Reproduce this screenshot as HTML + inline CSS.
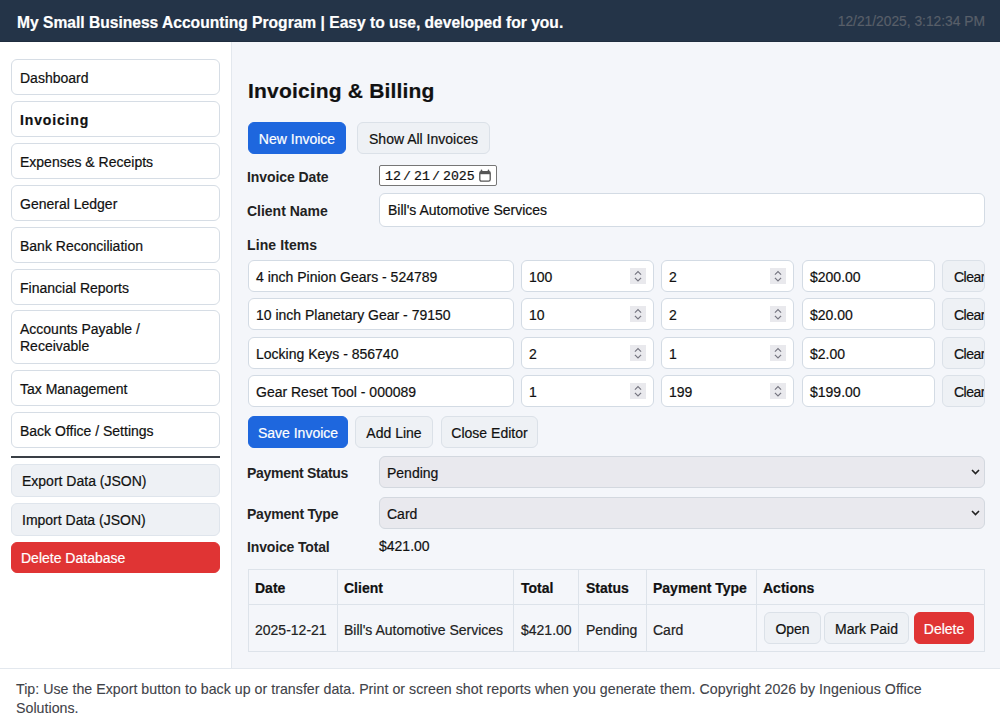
<!DOCTYPE html>
<html><head><meta charset="utf-8">
<style>
*{box-sizing:border-box;margin:0;padding:0}
html,body{width:1000px;height:724px;overflow:hidden}
body{font-family:"Liberation Sans",sans-serif;font-size:14px;color:#111;background:#f4f6fa;-webkit-text-stroke:0.2px currentColor;position:relative}
.abs{position:absolute}
#hdr{left:0;top:0;width:1000px;height:42px;background:#243448;border-bottom:1px solid #1f2d3f}
#hdr .t{left:17px;top:14px;font-weight:bold;font-size:15.6px;color:#fff;white-space:nowrap;line-height:18px}
#hdr .d{right:15px;top:14px;color:#585f69;font-size:13.8px;line-height:16px;white-space:nowrap}
#side{left:0;top:42px;width:232px;height:626px;background:#fff;border-right:1px solid #e3e8ee}
.nb{position:absolute;left:11px;width:209px;height:36px;border:1px solid #d6dde5;border-radius:6px;background:#fff;padding-left:8px;padding-top:1px;line-height:34px;font-size:14px;color:#111;white-space:nowrap}
.nb.b{font-weight:bold;letter-spacing:0.85px}
.sb{position:absolute;left:11px;width:209px;height:33px;border:1px solid #dfe5ec;border-radius:6px;background:#eef1f5;padding-left:10px;line-height:33px;font-size:14px;color:#111;white-space:nowrap}
.sb.red{background:#e03434;border-color:#e03434;color:#fff;padding-left:9px;height:31px;line-height:31px}
#hr{left:11px;top:456px;width:209px;height:2px;background:#3a3f46}
#foot{left:0;top:668px;width:1000px;height:56px;background:#fff;border-top:1px solid #e3e8ee}
#foot .tx{left:16px;top:11px;width:950px;font-size:14.2px;letter-spacing:0.025px;line-height:19px;color:#3f4349;-webkit-text-stroke:0.1px currentColor}
h2{position:absolute;left:248px;top:78px;font-size:21px;letter-spacing:0.18px;font-weight:bold;color:#111;line-height:26px;white-space:nowrap}
.btn{position:absolute;height:32px;border:1px solid #dbe1e8;border-radius:6px;background:#eef1f5;color:#111;font-size:14px;line-height:32px;text-align:center;white-space:nowrap}
.btn.blue{background:#1e67de;border-color:#1e67de;color:#fff}
.btn.red{background:#e03434;border-color:#e03434;color:#fff}
.lbl{position:absolute;left:247px;font-weight:bold;font-size:14px;-webkit-text-stroke:0;color:#222;white-space:nowrap;line-height:16px}
.inp{position:absolute;height:32px;border:1px solid #d3dbe4;border-radius:6px;background:#fff;font-size:14px;line-height:32px;padding-left:7px;color:#111;white-space:nowrap;overflow:hidden}
.spin{position:absolute;top:7px;width:16px;height:16px;background:#e9e9ed}
.spin svg{display:block}
.dt{position:absolute;top:169px;font-family:"Liberation Mono",monospace;font-size:13.2px;line-height:15px;color:#111;white-space:nowrap}
.sel svg{position:absolute;right:4px;top:12px}
.sel{position:absolute;left:379px;width:606px;height:32px;border:1px solid #d3d8df;border-radius:6px;background:#e9e9ee;font-size:14px;line-height:32px;padding-left:7px;color:#111}
.clr{left:0;top:0;width:43px;overflow:hidden;text-align:left;padding-left:11px;line-height:32px;letter-spacing:-0.5px}
.th{position:absolute;top:580px;font-weight:bold;font-size:14px;line-height:16px;color:#111;white-space:nowrap}
.td{position:absolute;top:622px;font-size:14px;line-height:16px;color:#222;white-space:nowrap}
</style></head><body>
<div id="hdr" class="abs"><div class="abs t">My Small Business Accounting Program | Easy to use, developed for you.</div><div class="abs d">12/21/2025, 3:12:34 PM</div></div>
<div id="side" class="abs"></div>
<div class="nb" style="top:59px">Dashboard</div>
<div class="nb b" style="top:101px">Invoicing</div>
<div class="nb" style="top:143px">Expenses &amp; Receipts</div>
<div class="nb" style="top:185px">General Ledger</div>
<div class="nb" style="top:227px">Bank Reconciliation</div>
<div class="nb" style="top:269px">Financial Reports</div>
<div class="nb" style="top:310px;height:54px;line-height:17px;padding-top:10px">Accounts Payable /<br>Receivable</div>
<div class="nb" style="top:370px">Tax Management</div>
<div class="nb" style="top:412px">Back Office / Settings</div>
<div id="hr" class="abs"></div>
<div class="sb" style="top:464px">Export Data (JSON)</div>
<div class="sb" style="top:503px">Import Data (JSON)</div>
<div class="sb red" style="top:542px">Delete Database</div>

<h2>Invoicing &amp; Billing</h2>
<div class="btn blue" style="left:248px;top:122px;width:98px">New Invoice</div>
<div class="btn" style="left:357px;top:122px;width:133px">Show All Invoices</div>

<div class="lbl" style="top:169px;letter-spacing:-0.08px">Invoice Date</div>
<div class="abs" id="date" style="left:379px;top:165px;width:118px;height:21px;border:1px solid #767676;border-radius:2px;background:#fff"></div>
<div class="dt" style="left:385px">12</div><div class="dt" style="left:403px">/</div><div class="dt" style="left:414px">21</div><div class="dt" style="left:432px">/</div><div class="dt" style="left:443px">2025</div>
<svg class="abs" style="left:478px;top:169px" width="14" height="14" viewBox="0 0 14 14"><path d="M3.5 1.2v2.3M10.5 1.2v2.3" stroke="#555" stroke-width="1.6" stroke-linecap="round"/><rect x="1.8" y="2.6" width="10.4" height="9.6" rx="1.6" fill="none" stroke="#555" stroke-width="1.3"/><rect x="1.8" y="2.6" width="10.4" height="2.6" fill="#555"/></svg>

<div class="lbl" style="top:203px;letter-spacing:-0.02px">Client Name</div>
<div class="inp" style="left:379px;top:193px;width:606px;height:34px;line-height:32px;padding-left:8px">Bill's Automotive Services</div>
<div class="lbl" style="top:237px;letter-spacing:0.1px">Line Items</div>
<div class="inp" style="left:248px;top:260px;width:266px">4 inch Pinion Gears - 524789</div>
<div class="inp" style="left:521px;top:260px;width:133px">100<div class="spin" style="left:108px"><svg width="16" height="16" viewBox="0 0 16 16"><path d="M4.9 6.7L8 3.6L11.1 6.7M4.9 9.8L8 12.9L11.1 9.8" fill="none" stroke="#777782" stroke-width="1.2"/></svg></div></div>
<div class="inp" style="left:661px;top:260px;width:133px">2<div class="spin" style="left:108px"><svg width="16" height="16" viewBox="0 0 16 16"><path d="M4.9 6.7L8 3.6L11.1 6.7M4.9 9.8L8 12.9L11.1 9.8" fill="none" stroke="#777782" stroke-width="1.2"/></svg></div></div>
<div class="inp" style="left:802px;top:260px;width:133px">$200.00</div>
<div class="abs" style="left:942px;top:260px;width:43px;height:32px;overflow:hidden"><div class="btn clr">Clear</div></div>
<div class="inp" style="left:248px;top:298px;width:266px">10 inch Planetary Gear - 79150</div>
<div class="inp" style="left:521px;top:298px;width:133px">10<div class="spin" style="left:108px"><svg width="16" height="16" viewBox="0 0 16 16"><path d="M4.9 6.7L8 3.6L11.1 6.7M4.9 9.8L8 12.9L11.1 9.8" fill="none" stroke="#777782" stroke-width="1.2"/></svg></div></div>
<div class="inp" style="left:661px;top:298px;width:133px">2<div class="spin" style="left:108px"><svg width="16" height="16" viewBox="0 0 16 16"><path d="M4.9 6.7L8 3.6L11.1 6.7M4.9 9.8L8 12.9L11.1 9.8" fill="none" stroke="#777782" stroke-width="1.2"/></svg></div></div>
<div class="inp" style="left:802px;top:298px;width:133px">$20.00</div>
<div class="abs" style="left:942px;top:298px;width:43px;height:32px;overflow:hidden"><div class="btn clr">Clear</div></div>
<div class="inp" style="left:248px;top:337px;width:266px">Locking Keys - 856740</div>
<div class="inp" style="left:521px;top:337px;width:133px">2<div class="spin" style="left:108px"><svg width="16" height="16" viewBox="0 0 16 16"><path d="M4.9 6.7L8 3.6L11.1 6.7M4.9 9.8L8 12.9L11.1 9.8" fill="none" stroke="#777782" stroke-width="1.2"/></svg></div></div>
<div class="inp" style="left:661px;top:337px;width:133px">1<div class="spin" style="left:108px"><svg width="16" height="16" viewBox="0 0 16 16"><path d="M4.9 6.7L8 3.6L11.1 6.7M4.9 9.8L8 12.9L11.1 9.8" fill="none" stroke="#777782" stroke-width="1.2"/></svg></div></div>
<div class="inp" style="left:802px;top:337px;width:133px">$2.00</div>
<div class="abs" style="left:942px;top:337px;width:43px;height:32px;overflow:hidden"><div class="btn clr">Clear</div></div>
<div class="inp" style="left:248px;top:375px;width:266px">Gear Reset Tool - 000089</div>
<div class="inp" style="left:521px;top:375px;width:133px">1<div class="spin" style="left:108px"><svg width="16" height="16" viewBox="0 0 16 16"><path d="M4.9 6.7L8 3.6L11.1 6.7M4.9 9.8L8 12.9L11.1 9.8" fill="none" stroke="#777782" stroke-width="1.2"/></svg></div></div>
<div class="inp" style="left:661px;top:375px;width:133px">199<div class="spin" style="left:108px"><svg width="16" height="16" viewBox="0 0 16 16"><path d="M4.9 6.7L8 3.6L11.1 6.7M4.9 9.8L8 12.9L11.1 9.8" fill="none" stroke="#777782" stroke-width="1.2"/></svg></div></div>
<div class="inp" style="left:802px;top:375px;width:133px">$199.00</div>
<div class="abs" style="left:942px;top:375px;width:43px;height:32px;overflow:hidden"><div class="btn clr">Clear</div></div>

<div class="btn blue" style="left:248px;top:416px;width:100px">Save Invoice</div>
<div class="btn" style="left:355px;top:416px;width:78px">Add Line</div>
<div class="btn" style="left:441px;top:416px;width:97px">Close Editor</div>

<div class="lbl" style="top:465px;letter-spacing:-0.28px">Payment Status</div>
<div class="sel" style="top:456px">Pending<svg width="9" height="6" viewBox="0 0 9 6"><path d="M1 1L4.5 4.5L8 1" fill="none" stroke="#222" stroke-width="1.6"/></svg></div>
<div class="lbl" style="top:506px;letter-spacing:-0.22px">Payment Type</div>
<div class="sel" style="top:497px">Card<svg width="9" height="6" viewBox="0 0 9 6"><path d="M1 1L4.5 4.5L8 1" fill="none" stroke="#222" stroke-width="1.6"/></svg></div>
<div class="lbl" style="top:539px;letter-spacing:-0.15px">Invoice Total</div>
<div class="abs" style="left:379px;top:538px;line-height:16px">$421.00</div>

<div class="abs" id="tbl" style="left:248px;top:569px;width:737px;height:83px;border:1px solid #dde3ea"></div>
<div class="abs" style="left:249px;top:604px;width:735px;height:1px;background:#dde3ea"></div>
<div class="abs" style="left:337px;top:570px;width:1px;height:81px;background:#dde3ea"></div>
<div class="abs" style="left:513px;top:570px;width:1px;height:81px;background:#dde3ea"></div>
<div class="abs" style="left:578px;top:570px;width:1px;height:81px;background:#dde3ea"></div>
<div class="abs" style="left:646px;top:570px;width:1px;height:81px;background:#dde3ea"></div>
<div class="abs" style="left:756px;top:570px;width:1px;height:81px;background:#dde3ea"></div>
<div class="th" style="left:255px">Date</div>
<div class="td" style="left:255px">2025-12-21</div>
<div class="th" style="left:344px">Client</div>
<div class="td" style="left:344px">Bill's Automotive Services</div>
<div class="th" style="left:521px">Total</div>
<div class="td" style="left:521px">$421.00</div>
<div class="th" style="left:586px">Status</div>
<div class="td" style="left:586px">Pending</div>
<div class="th" style="left:653px">Payment Type</div>
<div class="td" style="left:653px">Card</div>
<div class="th" style="left:763px">Actions</div>
<div class="btn" style="left:764px;top:612px;width:57px">Open</div>
<div class="btn" style="left:824px;top:612px;width:85px">Mark Paid</div>
<div class="btn red" style="left:914px;top:612px;width:60px">Delete</div>


<div id="foot" class="abs"><div class="abs tx">Tip: Use the Export button to back up or transfer data. Print or screen shot reports when you generate them. Copyright 2026 by Ingenious Office Solutions.</div></div>
</body></html>
